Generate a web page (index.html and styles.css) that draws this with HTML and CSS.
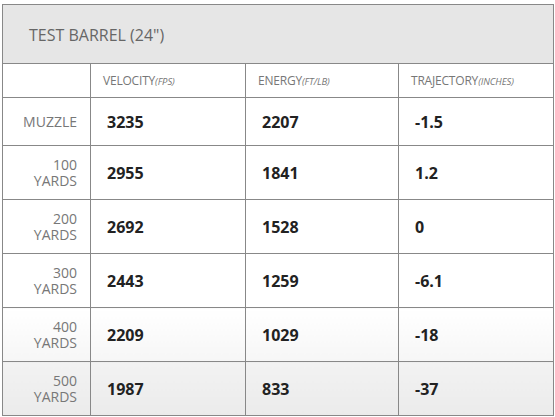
FILE: index.html
```html
<!DOCTYPE html>
<html>
<head>
<meta charset="utf-8">
<link rel="stylesheet" href="styles.css">
</head>
<body>
<table class="ballistics">
  <colgroup>
    <col class="c-label">
    <col class="c-val">
    <col class="c-val2">
    <col class="c-val">
  </colgroup>
  <thead>
    <tr class="title-row"><th colspan="4">TEST BARREL (24")</th></tr>
    <tr class="head-row">
      <th></th>
      <th>VELOCITY<em>(FPS)</em></th>
      <th>ENERGY<em>(FT/LB)</em></th>
      <th>TRAJECTORY<em>(INCHES)</em></th>
    </tr>
  </thead>
  <tbody>
    <tr class="first"><td class="label">MUZZLE</td><td>3235</td><td>2207</td><td>-1.5</td></tr>
    <tr><td class="label"><span>100</span><span>YARDS</span></td><td>2955</td><td>1841</td><td>1.2</td></tr>
    <tr><td class="label"><span>200</span><span>YARDS</span></td><td>2692</td><td>1528</td><td>0</td></tr>
    <tr><td class="label"><span>300</span><span>YARDS</span></td><td>2443</td><td>1259</td><td>-6.1</td></tr>
    <tr class="fade1"><td class="label"><span>400</span><span>YARDS</span></td><td>2209</td><td>1029</td><td>-18</td></tr>
    <tr class="fade2"><td class="label"><span>500</span><span>YARDS</span></td><td>1987</td><td>833</td><td>-37</td></tr>
  </tbody>
</table>
</body>
</html>
```

FILE: styles.css
```css
html, body {
  margin: 0;
  padding: 0;
  background: #fff;
}
body {
  padding: 4px 2px 0 2px;
  font-family: "Open Sans", "DejaVu Sans", sans-serif;
}
.ballistics {
  border-collapse: collapse;
  width: 552px;
  table-layout: fixed;
  border: 1px solid #888;
}
.c-label { width: 88px; }
.c-val { width: 155px; }
.c-val2 { width: 153px; }
.ballistics th, .ballistics td {
  border: 1px solid #888;
  padding: 0;
}
.ballistics .title-row th {
  height: 57px;
  background: #e6e6e6;
  text-align: left;
  font-weight: normal;
  font-size: 16px;
  color: #666;
  padding-left: 26px;
  padding-top: 1px;
}
.ballistics .head-row th {
  height: 33px;
  text-align: left;
  font-weight: normal;
  font-size: 12px;
  color: #777;
  padding-left: 12px;
  letter-spacing: -0.2px;
}
.head-row th em {
  font-size: 9.5px;
  font-style: italic;
  letter-spacing: -0.1px;
}
.ballistics tbody td {
  height: 53px;
  font-size: 16px;
  font-weight: bold;
  color: #222;
  padding-left: 16px;
}
.ballistics tbody tr.first td { height: 47px; }
.ballistics tbody td.label {
  font-size: 14px;
  font-weight: normal;
  color: #777;
  text-align: right;
  padding-left: 0;
  padding-right: 13px;
  line-height: 16px;
}
.label span {
  display: block;
}
tr.fade1 td { background: linear-gradient(#ffffff, #f6f6f6); }
tr.fade2 td { background: linear-gradient(#f2f2f2, #ebebeb); }
```
